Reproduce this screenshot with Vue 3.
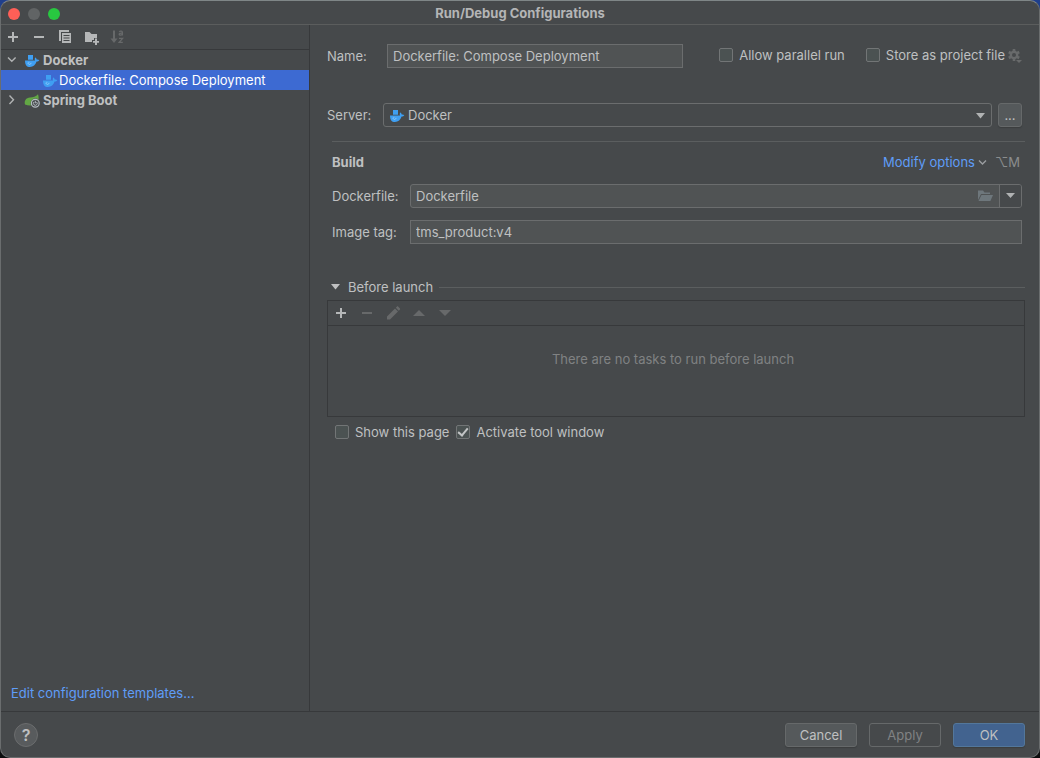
<script setup>
import { ref } from 'vue'

const name = ref('Dockerfile: Compose Deployment')
const server = ref('Docker')
const dockerfile = ref('Dockerfile')
const imageTag = ref('tms_product:v4')
const parallel = ref(false)
const storeFile = ref(false)
const showPage = ref(false)
const activate = ref(true)
</script>

<template>
  <svg class="defs" width="0" height="0" aria-hidden="true">
    <symbol id="whale" viewBox="0 0 16 16">
      <path d="M4 3h5v4.800H4z" fill="#3f9ff2" />
      <path d="M1 8.400h10.100c-.5-1-.4-2 .1-2.900.9.400 1.400 1.200 1.500 2 .9-.2 1.800 0 2.600.4-.5 1.200-1.400 1.700-2.700 1.700C11.500 13.200 9.300 15 5.900 15 2.800 15 1 12.800 1 8.400z" fill="#3f9ff2" />
      <path d="M4 10.800c0 2.200 3 2.200 3 0M4.400 10.300h1" fill="none" stroke="#9fd0fa" stroke-width=".8" />
    </symbol>
    <symbol id="plus" viewBox="0 0 16 16">
      <path d="M7 3h2v4h4v2H9v4H7V9H3V7h4z" fill="currentColor" />
    </symbol>
    <symbol id="minus" viewBox="0 0 16 16">
      <path d="M3 7h10v2H3z" fill="currentColor" />
    </symbol>
  </svg>

  <div class="window">
    <header class="titlebar">
      <div class="lights">
        <button class="light red" aria-label="Close"></button>
        <button class="light grey" aria-label="Minimize" disabled></button>
        <button class="light green" aria-label="Zoom"></button>
      </div>
      <h1>Run/Debug Configurations</h1>
    </header>

    <div class="body">
      <aside class="sidebar">
        <div class="toolbar">
          <button class="tool" aria-label="Add configuration"><svg width="16" height="16"><use href="#plus" /></svg></button>
          <button class="tool" aria-label="Remove configuration"><svg width="16" height="16"><use href="#minus" /></svg></button>
          <button class="tool" aria-label="Copy configuration">
            <svg width="16" height="16" viewBox="0 0 16 16">
              <path d="M2 1h10v2H4v9H2z" fill="currentColor" />
              <path fill-rule="evenodd" d="M5 4h9v10H5zM6.500 6v1h6V6zm0 2.500v1h6v-1zm0 2.500v1h6v-1z" fill="currentColor" />
            </svg>
          </button>
          <button class="tool" aria-label="New folder">
            <svg width="16" height="16" viewBox="0 0 16 16">
              <path d="M2 3h4.500l2 2H14v4h-3v2H9v2H2z" fill="currentColor" />
              <path d="M12 9.500h2V12h2v1.800h-2V16h-2v-2.200h-2V12h2z" fill="currentColor" />
            </svg>
          </button>
          <button class="tool" aria-label="Sort configurations" disabled>
            <svg width="16" height="16" viewBox="0 0 16 16" fill="none" stroke="currentColor">
              <path d="M5 1.500v9" stroke-width="2" />
              <path d="M1.500 9.500h7L5 14z" fill="currentColor" stroke="none" />
              <path d="M10.200 2.700c1-.9 3.200-.8 3.200.7v3M13.400 4.200c-1.700-.2-3.200.1-3.200 1.100 0 1.200 2.400 1.100 3.200-.2M10 9.400h3.600l-3.400 4h3.600" stroke-width="1.300" />
            </svg>
          </button>
        </div>

        <ul class="tree" role="tree">
          <li class="row" role="treeitem" aria-expanded="true">
            <svg class="chevron" width="12" height="12" viewBox="0 0 12 12"><path d="M3 3.500l3.800 3.800 3.800-3.800" /></svg>
            <svg width="16" height="16"><use href="#whale" /></svg>
            <span class="group">Docker</span>
          </li>
          <li class="row child selected" role="treeitem" aria-selected="true">
            <svg width="16" height="16"><use href="#whale" /></svg>
            <span>Dockerfile: Compose Deployment</span>
          </li>
          <li class="row" role="treeitem" aria-expanded="false">
            <svg class="chevron" width="12" height="12" viewBox="0 0 12 12"><path d="M4.500 1.500l4 4.200-4 4.200" /></svg>
            <svg width="16" height="16" viewBox="0 0 16 16">
              <path d="M1 12.500C0 8.500 2 5.800 6 5.400c3-.2 6-.4 8-3.100 1 3 1 6-1 8.500-3 3-8 3.500-12 1.700z" fill="#62a744" />
              <circle cx="11.300" cy="11.300" r="4.700" fill="#46494b" />
              <circle cx="11.300" cy="11.300" r="3.900" fill="none" stroke="#b4bcc2" stroke-width="1.200" />
              <path d="M10 10a1.900 1.900 0 1 0 2.600 0M11.300 8.800v2.500" fill="none" stroke="#b4bcc2" />
            </svg>
            <span class="group">Spring Boot</span>
          </li>
        </ul>

        <a class="link templates" href="#">Edit configuration templates...</a>
      </aside>

      <main class="content">
        <div class="line name-line">
          <label class="name-label" for="name">Name:</label>
          <input id="name" v-model="name" class="field name-field" type="text" />
          <div class="options">
            <label class="check"><input v-model="parallel" type="checkbox" />Allow parallel run</label>
            <label class="check"><input v-model="storeFile" type="checkbox" />Store as project file</label>
            <button class="gear" aria-label="Storage settings" disabled>
              <svg width="14" height="16" viewBox="0 0 14 16">
                <g fill="currentColor">
                  <path d="M4.700 2h2.600v12H4.700z" />
                  <path d="M4.700 2h2.600v12H4.700z" transform="rotate(60 6 8)" />
                  <path d="M4.700 2h2.600v12H4.700z" transform="rotate(120 6 8)" />
                  <path d="M8 13h6l-3 3z" />
                </g>
                <circle cx="6" cy="8" r="3.200" fill="none" stroke="currentColor" stroke-width="2.400" />
                <circle cx="6" cy="8" r="2" fill="#46494b" />
              </svg>
            </button>
          </div>
        </div>

        <div class="line server-line">
          <label class="server-label" for="server">Server:</label>
          <div class="combo">
            <svg class="combo-icon" width="16" height="16"><use href="#whale" /></svg>
            <select id="server" v-model="server"><option>Docker</option></select>
            <svg class="combo-arrow" width="9" height="6" viewBox="0 0 9 6"><path d="M0 0h9L4.500 5.500z" fill="currentColor" /></svg>
          </div>
          <button class="btn more" aria-label="Browse servers">...</button>
        </div>

        <section class="build">
          <div class="line build-head">
            <h2>Build</h2>
            <button class="link modify">
              Modify options
              <svg width="9" height="9" viewBox="0 0 9 9"><path d="M1 2.500l3.500 3.500L8 2.500" fill="none" stroke="#9a9da0" stroke-width="1.400" /></svg>
            </button>
            <kbd>⌥M</kbd>
          </div>
          <div class="line build-line">
            <label for="dockerfile">Dockerfile:</label>
            <div class="browse">
              <input id="dockerfile" v-model="dockerfile" type="text" />
              <button class="folder" aria-label="Browse">
                <svg width="16" height="16" viewBox="0 0 16 16" fill="#6e777c">
                  <path d="M1 2.500h5l1.500 2H13V6H4L1 12z" />
                  <path d="M4.500 7H16l-2.600 6H1.500z" />
                </svg>
              </button>
              <button class="drop" aria-label="History">
                <svg width="9" height="6" viewBox="0 0 9 6"><path d="M0 0h9L4.500 5z" fill="currentColor" /></svg>
              </button>
            </div>
          </div>
          <div class="line build-line">
            <label for="tag">Image tag:</label>
            <input id="tag" v-model="imageTag" class="field tag" type="text" />
          </div>
        </section>

        <section class="before">
          <button class="before-head" aria-expanded="true">
            <svg width="9" height="6" viewBox="0 0 9 6"><path d="M0 0h9L4.500 5.500z" fill="currentColor" /></svg>
            <span>Before launch</span>
            <span class="rule"></span>
          </button>
          <div class="tasks">
            <div class="toolbar task-tools">
              <button class="tool" aria-label="Add task"><svg width="16" height="16"><use href="#plus" /></svg></button>
              <button class="tool" aria-label="Remove task" disabled><svg width="16" height="16"><use href="#minus" /></svg></button>
              <button class="tool" aria-label="Edit task" disabled>
                <svg width="16" height="16" viewBox="0 0 16 16" fill="currentColor">
                  <path d="M2 11.500L10 3.500l3 3L5 14.500H2zM10.800 2.700l1-1c.5-.5 1-.5 1.500 0l1.500 1.500c.5.5.5 1 0 1.500l-1 1z" />
                </svg>
              </button>
              <button class="tool" aria-label="Move up" disabled><svg width="16" height="16" viewBox="0 0 16 16"><path d="M2 11l6-6 6 6z" fill="currentColor" /></svg></button>
              <button class="tool" aria-label="Move down" disabled><svg width="16" height="16" viewBox="0 0 16 16"><path d="M2 5l6 6 6-6z" fill="currentColor" /></svg></button>
            </div>
            <p class="empty">There are no tasks to run before launch</p>
          </div>
          <div class="after">
            <label class="check"><input v-model="showPage" type="checkbox" />Show this page</label>
            <label class="check"><input v-model="activate" type="checkbox" />Activate tool window</label>
          </div>
        </section>
      </main>
    </div>

    <footer class="footer">
      <button class="help" aria-label="Help">?</button>
      <button class="btn">Cancel</button>
      <button class="btn" disabled>Apply</button>
      <button class="btn primary">OK</button>
    </footer>
  </div>
</template>

<style>
body {
  margin: 0;
  background: linear-gradient(#1f3f8c 0, #1f3f8c 20px, #0c0d0e 21px);
}
</style>

<style scoped>
.window,
.window * {
  box-sizing: border-box;
}
.defs {
  position: absolute;
}
.window {
  display: flex;
  flex-direction: column;
  min-height: 100vh;
  border: 1px solid #6a6d6e;
  border-top-color: #7f8687;
  border-radius: 10px;
  overflow: hidden;
  background: #46494b;
  color: #bfc0c1;
  font: 13px/16px Inter, "Liberation Sans", sans-serif;
}
svg {
  display: block;
  flex: none;
}
button,
input,
select {
  margin: 0;
  padding: 0;
  border: 0;
  background: none;
  color: inherit;
  font: inherit;
  outline: none;
}
h1,
h2,
p,
ul {
  margin: 0;
  padding: 0;
  font-size: inherit;
}
.titlebar {
  display: grid;
  grid-template-columns: 1fr auto 1fr;
  align-items: center;
  height: 24px;
  border-bottom: 1px solid #5b5d5d;
}
.titlebar h1 {
  padding-top: 1px;
  font-weight: 700;
  color: #b4b5b6;
}
.lights {
  display: flex;
  gap: 8px;
  padding: 2px 0 0 7px;
}
.light {
  width: 12px;
  height: 12px;
  border-radius: 50%;
}
.red { background: #ff5f57; }
.grey { background: #616465; }
.green { background: #28c840; }

.body {
  display: flex;
  flex: 1;
}
.sidebar {
  display: flex;
  flex-direction: column;
  width: 309px;
  flex: none;
  border-right: 1px solid #37393b;
}
.toolbar {
  display: flex;
  align-items: center;
  gap: 10px;
  height: 25px;
  padding: 0 4px;
  border-bottom: 1px solid #37393b;
}
.tool {
  color: #b5b7b8;
}
.tool:disabled {
  color: #67696a;
}
.tree {
  list-style: none;
}
.row {
  display: flex;
  align-items: center;
  gap: 2px;
  height: 20px;
  padding-left: 4px;
}
.chevron {
  margin-right: 5px;
  fill: none;
  stroke: #b0b2b3;
  stroke-width: 1.4;
}
.child {
  gap: 1px;
  padding-left: 41px;
}
.selected {
  background: #3d6ad2;
  color: #fff;
}
.group {
  margin-left: 1px;
  font-weight: 700;
}
.link {
  color: #5f9df8;
  text-decoration: none;
}
.templates {
  margin: auto 0 10px 10px;
}

.content {
  flex: 1;
  min-width: 0;
  padding: 19px 14px 0 17px;
}
.line {
  display: flex;
  align-items: center;
}
.field,
.browse {
  height: 24px;
  border: 1px solid #6b6d6e;
  background: #505354;
}
.field {
  padding: 0 5px;
}
.name-line,
.server-line {
  padding-right: 3px;
}
.name-label {
  width: 60px;
}
.name-field {
  width: 296px;
}
.options {
  display: flex;
  align-self: flex-start;
  align-items: center;
  height: 22px;
  margin-left: auto;
}
.check {
  display: flex;
  align-items: center;
}
.options .check + .check {
  margin-left: 21px;
}
.check input {
  display: grid;
  place-items: center;
  width: 14px;
  height: 14px;
  margin-right: 6px;
  border: 1px solid #727576;
  border-radius: 2px;
  background: #4b5252;
  appearance: none;
}
.check input:checked::after {
  content: "";
  width: 4px;
  height: 8px;
  margin-bottom: 2px;
  border: solid #c3c5c6;
  border-width: 0 2px 2px 0;
  transform: rotate(40deg);
}
.gear {
  margin-left: 3px;
  color: #686a6b;
}
.server-line {
  margin-top: 35px;
}
.server-label {
  width: 56px;
}
.combo {
  position: relative;
  flex: 1;
  height: 24px;
}
.combo select {
  width: 100%;
  height: 24px;
  padding: 0 24px;
  border: 1px solid #6b6d6e;
  border-radius: 3px;
  appearance: none;
}
.combo-icon {
  position: absolute;
  top: 4px;
  left: 6px;
}
.combo-arrow {
  position: absolute;
  top: 10px;
  right: 7px;
  color: #b0b2b3;
}
.btn {
  width: 72px;
  height: 24px;
  border: 1px solid #66696a;
  border-radius: 3px;
  background: #55595b;
  box-shadow: 0 1px 1px #3b3e3f;
}
.btn:disabled {
  background: none;
  box-shadow: none;
  color: #808283;
}
.btn.primary {
  border-color: #53779b;
  background: #42638f;
}
.more {
  width: 24px;
  margin-left: 6px;
}

.build {
  margin: 14px 0 0 5px;
  padding-right: 3px;
}
.build-head {
  height: 43px;
  margin-right: -3px;
  padding-bottom: 2px;
  border-top: 1px solid #5b5e5f;
}
.build-head h2 {
  font-weight: 700;
}
.modify {
  display: flex;
  align-items: center;
  gap: 3px;
  margin-left: auto;
}
kbd {
  margin: 0 5px 0 8px;
  font-family: inherit;
  color: #8b8d8e;
}
.build-line + .build-line {
  margin-top: 12px;
}
.build-line label {
  width: 78px;
}
.browse {
  display: flex;
  flex: 1;
  align-items: center;
  border-radius: 3px;
  overflow: hidden;
}
.browse input {
  flex: 1;
  min-width: 0;
  padding: 0 5px;
}
.folder {
  margin-right: 6px;
}
.drop {
  display: grid;
  place-items: center;
  align-self: stretch;
  width: 22px;
  border-left: 1px solid #6b6d6e;
  background: #46494b;
  color: #b0b2b3;
}
.tag {
  flex: 1;
}

.before {
  margin-top: 35px;
}
.before-head {
  display: flex;
  align-items: center;
  width: 100%;
  padding-left: 4px;
}
.before-head svg {
  margin-right: 8px;
}
.rule {
  flex: 1;
  height: 1px;
  margin-left: 6px;
  background: #5b5e5f;
}
.tasks {
  margin-top: 5px;
  min-height: 117px;
  border: 1px solid #37393b;
}
.task-tools {
  padding: 0 5px;
}
.empty {
  padding: 25px 6px 0 0;
  text-align: center;
  color: #808283;
}
.after {
  display: flex;
  gap: 7px;
  margin: 7px 0 0 8px;
}

.footer {
  display: flex;
  align-items: center;
  gap: 12px;
  height: 46px;
  padding: 0 14px 0 13px;
  border-top: 1px solid #37393b;
}
.help {
  width: 24px;
  height: 24px;
  margin-right: auto;
  border: 1px solid #6b6d6e;
  border-radius: 50%;
  background: #585b5d;
  font-size: 16px;
  font-weight: 600;
}
</style>
